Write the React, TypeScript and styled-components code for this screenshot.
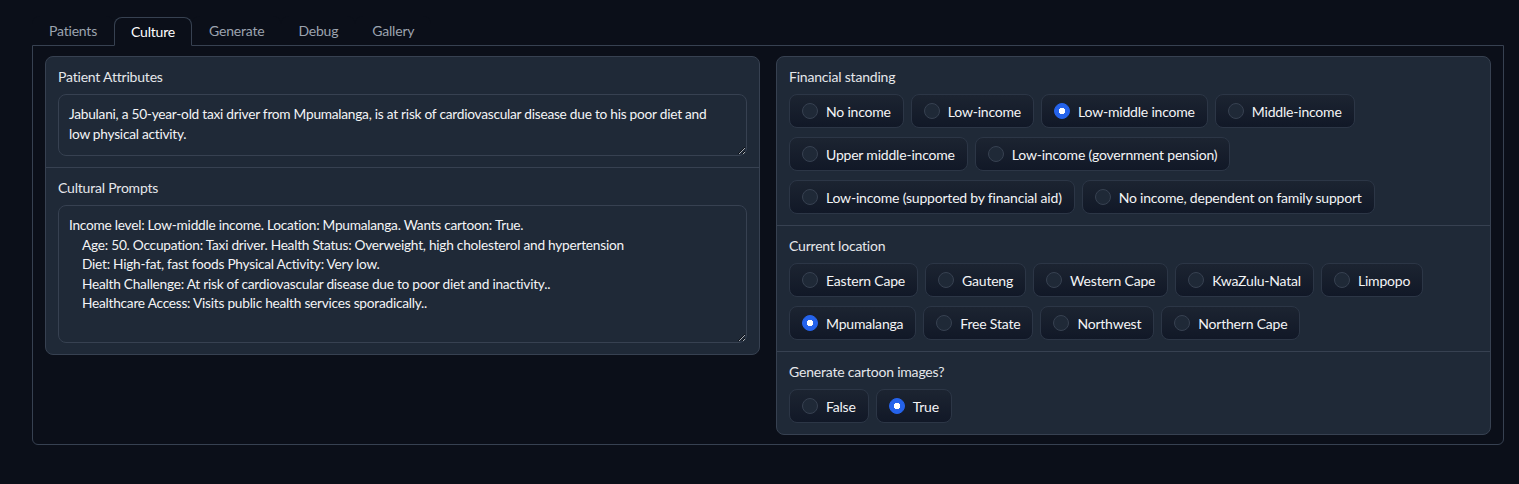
import React from "react";
import styled, { createGlobalStyle } from "styled-components";

const GlobalStyle = createGlobalStyle`
  html, body { margin: 0; padding: 0; background: #0b0f19; }
  body { font-family: "Lato", "Noto Sans", sans-serif; color: #e5e7eb; letter-spacing: -0.2px; }
  * { box-sizing: border-box; }
`;

const Page = styled.div`
  padding: 16px 15px 40px 32px;
  width: 1519px;
`;

const TabBar = styled.div`
  display: flex;
  align-items: flex-end;
  height: 29px;
`;

const Tab = styled.button<{ $active?: boolean }>`
  font-family: inherit;
  letter-spacing: inherit;
  font-size: 14px;
  height: 29px;
  margin-bottom: ${(p) => (p.$active ? "-1px" : "0")};
  padding: 0 16px 1px;
  background: #0b0f19;
  color: ${(p) => (p.$active ? "#ffffff" : "#9ca3af")};
  border: 1px solid ${(p) => (p.$active ? "#374151" : "transparent")};
  border-bottom: ${(p) => (p.$active ? "1px solid #0b0f19" : "none")};
  border-radius: 8px 8px 0 0;
  position: relative;
  z-index: 1;
  cursor: pointer;
`;

const Panel = styled.div`
  border: 1px solid #374151;
  border-radius: 0 0 6px 6px;
  padding: 10px 12px 9px 12px;
  display: grid;
  grid-template-columns: 1fr 1fr;
  gap: 16px;
  align-items: start;
`;

const Group = styled.div`
  background: #1f2937;
  border: 1px solid #374151;
  border-radius: 8px;
  overflow: hidden;
  display: flex;
  flex-direction: column;
`;

const Block = styled.div`
  padding: 10px 12px 11px 12px;
  display: flex;
  flex-direction: column;
  gap: 8px;
  & + & {
    border-top: 1px solid #374151;
  }
`;

const Label = styled.span`
  font-size: 14px;
  line-height: 19px;
  color: #e5e7eb;
`;

const TextArea = styled.textarea<{ $h: number }>`
  width: 100%;
  height: ${(p) => p.$h}px;
  background: #1f2937;
  border: 1px solid #374151;
  border-radius: 8px;
  padding: 9px 20px 9px 10px;
  color: #f3f4f6;
  font-family: inherit;
  letter-spacing: -0.25px;
  font-size: 13.7px;
  line-height: 19.6px;
  resize: vertical;
  outline: none;
  display: block;
`;

const Options = styled.div`
  display: flex;
  flex-wrap: wrap;
  gap: 9px 7px;
`;

const Option = styled.label`
  display: inline-flex;
  align-items: center;
  gap: 8px;
  height: 34px;
  padding: 0 12px;
  background: linear-gradient(to bottom, #1c2431, #111827);
  border: 1px solid #2c3646;
  border-radius: 8px;
  font-size: 14px;
  color: #f3f4f6;
  cursor: pointer;
`;

const Radio = styled.input`
  appearance: none;
  margin: 0;
  width: 16px;
  height: 16px;
  border-radius: 50%;
  border: 1px solid #374151;
  background: #1f2937;
  flex-shrink: 0;
  &:checked {
    background: #2563eb;
    border-color: #2563eb;
    background-image: radial-gradient(circle, #ffffff 0 3px, transparent 3.5px);
  }
`;

type RadioGroupProps = { label: string; name: string; options: string[]; value: string };

const RadioBlock = ({ label, name, options, value }: RadioGroupProps) => (
  <Block>
    <Label>{label}</Label>
    <Options>
      {options.map((o) => (
        <Option key={o}>
          <Radio type="radio" name={name} defaultChecked={o === value} />
          {o}
        </Option>
      ))}
    </Options>
  </Block>
);

const prompt =
  "Income level: Low-middle income. Location: Mpumalanga. Wants cartoon: True.\n" +
  "    Age: 50. Occupation: Taxi driver. Health Status: Overweight, high cholesterol and hypertension\n" +
  "    Diet: High-fat, fast foods Physical Activity: Very low.\n" +
  "    Health Challenge: At risk of cardiovascular disease due to poor diet and inactivity..\n" +
  "    Healthcare Access: Visits public health services sporadically..";

export default function App() {
  return (
    <Page>
      <GlobalStyle />
      <TabBar>
        <Tab>Patients</Tab>
        <Tab $active>Culture</Tab>
        <Tab>Generate</Tab>
        <Tab>Debug</Tab>
        <Tab>Gallery</Tab>
      </TabBar>
      <Panel>
        <Group>
          <Block>
            <Label>Patient Attributes</Label>
            <TextArea
              $h={62}
              readOnly
              defaultValue="Jabulani, a 50-year-old taxi driver from Mpumalanga, is at risk of cardiovascular disease due to his poor diet and low physical activity."
            />
          </Block>
          <Block>
            <Label>Cultural Prompts</Label>
            <TextArea $h={138} readOnly defaultValue={prompt} />
          </Block>
        </Group>
        <Group>
          <RadioBlock
            label="Financial standing"
            name="fin"
            value="Low-middle income"
            options={[
              "No income",
              "Low-income",
              "Low-middle income",
              "Middle-income",
              "Upper middle-income",
              "Low-income (government pension)",
              "Low-income (supported by financial aid)",
              "No income, dependent on family support",
            ]}
          />
          <RadioBlock
            label="Current location"
            name="loc"
            value="Mpumalanga"
            options={[
              "Eastern Cape",
              "Gauteng",
              "Western Cape",
              "KwaZulu-Natal",
              "Limpopo",
              "Mpumalanga",
              "Free State",
              "Northwest",
              "Northern Cape",
            ]}
          />
          <RadioBlock
            label="Generate cartoon images?"
            name="cartoon"
            value="True"
            options={["False", "True"]}
          />
        </Group>
      </Panel>
    </Page>
  );
}
